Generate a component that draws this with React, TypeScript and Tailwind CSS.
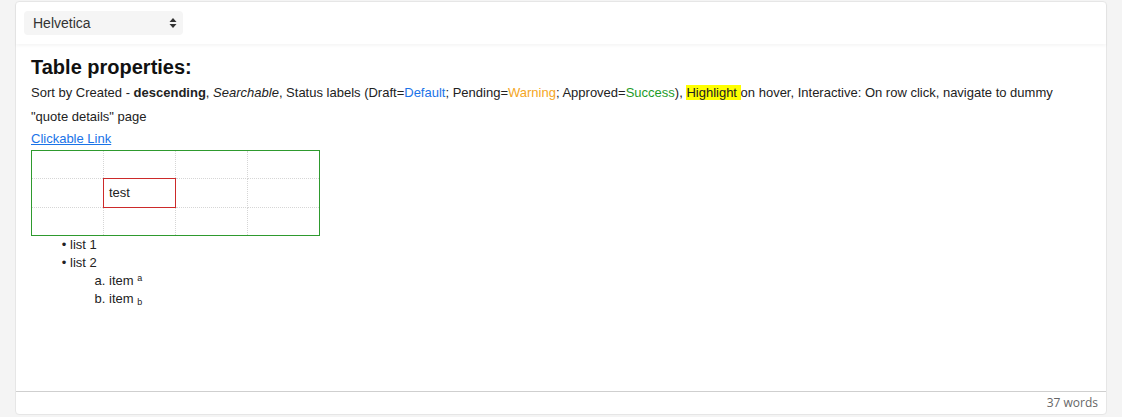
export default function App() {
  return (
    <div className="min-h-[417px] w-full bg-[#f4f4f4] px-[15px] pt-px font-['Liberation_Sans',Arial,sans-serif] text-[#222]">
      <div className="flex h-[414px] flex-col rounded-[4px] border border-[#e6e6e6] bg-white">
        <div className="flex h-[42px] items-center px-2 shadow-[0_2px_3px_rgba(0,0,0,0.04)]">
          <div className="flex h-6 w-[159px] items-center justify-between rounded-[4px] bg-[#f5f5f5] pl-[9px] pr-[6px] text-[14px] text-[#333]">
            <span>Helvetica</span>
            <svg width="8" height="12" viewBox="0 0 8 12" className="text-[#333]">
              <path d="M4 1 L7.5 5 H0.5 Z" fill="currentColor" />
              <path d="M4 11 L7.5 7 H0.5 Z" fill="currentColor" />
            </svg>
          </div>
        </div>

        <div className="flex-1 px-[15px] pt-[11px] text-[13px]">
          <h1 className="text-[20px] font-bold leading-[24px] text-[#111]">Table properties:</h1>
          <p className="mt-[2px] leading-[24px]">
            Sort by Created - <b>descending</b>, <i>Searchable</i>, Status labels (Draft=
            <span className="text-[#1a73e8]">Default</span>; Pending=
            <span className="text-[#f5a623]">Warning</span>; Approved=
            <span className="text-[#1e9b2a]">Success</span>),{" "}
            <span className="bg-[#ffff00]">Highlight </span>on hover, Interactive: On row click, navigate to dummy
            "quote details" page
          </p>
          <a href="#" className="block leading-[20px] text-[#1a73e8] underline">
            Clickable Link
          </a>
          <table className="mt-px border-collapse border border-[#2e9a2e]">
            <tbody>
              <tr className="h-[28px]">
                <td className="w-[72px] border border-dotted border-[#d6d6d6]"></td>
                <td className="w-[72px] border border-dotted border-[#d6d6d6]"></td>
                <td className="w-[72px] border border-dotted border-[#d6d6d6]"></td>
                <td className="w-[72px] border border-dotted border-[#d6d6d6]"></td>
              </tr>
              <tr className="h-[29px]">
                <td className="border border-dotted border-[#d6d6d6]"></td>
                <td className="border border-solid border-[#cc2a2a] px-[5px]">test</td>
                <td className="border border-dotted border-[#d6d6d6]"></td>
                <td className="border border-dotted border-[#d6d6d6]"></td>
              </tr>
              <tr className="h-[28px]">
                <td className="border border-dotted border-[#d6d6d6]"></td>
                <td className="border border-dotted border-[#d6d6d6]"></td>
                <td className="border border-dotted border-[#d6d6d6]"></td>
                <td className="border border-dotted border-[#d6d6d6]"></td>
              </tr>
            </tbody>
          </table>
          <ul className="list-['•_'] pl-[39px] leading-[18px]">
            <li>list 1</li>
            <li>
              list 2
              <ol className="list-[lower-alpha] pl-[39px]">
                <li>
                  item <sup className="text-[9px]">a</sup>
                </li>
                <li>
                  item <sub className="text-[9px]">b</sub>
                </li>
              </ol>
            </li>
          </ul>
        </div>

        <div className="flex h-[23px] items-center justify-end border-t border-[#cfcfcf] pr-2 font-['Open_Sans',sans-serif] text-[12px] text-[#666]">
          37 words
        </div>
      </div>
    </div>
  );
}
